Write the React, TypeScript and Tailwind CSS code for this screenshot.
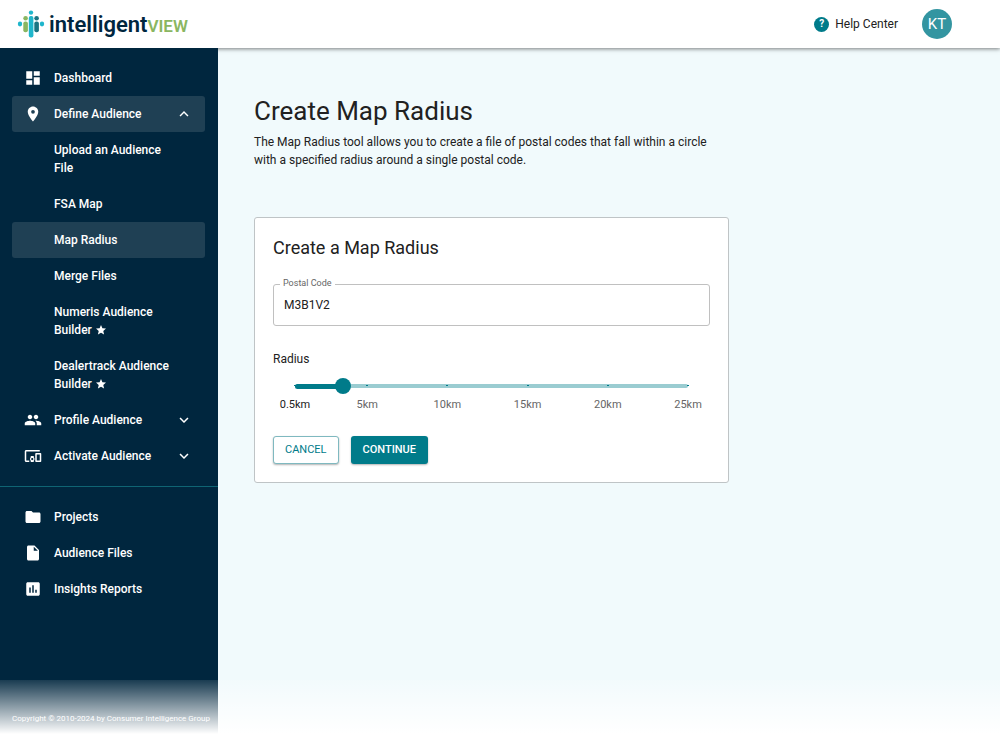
import { useState } from "react";
import {
  MdAssessment,
  MdDashboard,
  MdDevicesOther,
  MdExpandLess,
  MdExpandMore,
  MdFolder,
  MdGroup,
  MdInsertDriveFile,
  MdLocationOn,
  MdStar,
} from "react-icons/md";
import type { IconType } from "react-icons";

const MIN = 0.5;
const MAX = 25;
const MARKS = [0.5, 5, 10, 15, 20, 25];

const AUDIENCE_LINKS = [
  { label: "Upload an Audience File" },
  { label: "FSA Map" },
  { label: "Map Radius", active: true },
  { label: "Merge Files" },
  { label: "Numeris Audience Builder", star: true },
  { label: "Dealertrack Audience Builder", star: true },
];

function percent(value: number) {
  return `${((value - MIN) / (MAX - MIN)) * 100}%`;
}

function Logo() {
  return (
    <a href="#" aria-label="intelligentVIEW" className="flex items-center gap-1">
      <svg viewBox="0 0 28 30" className="h-[30px] w-7" aria-hidden="true">
        <g fill="#1fb6cc">
          <ellipse cx="3" cy="15" rx="2.2" ry="2.4" />
          <circle cx="14" cy="3.6" r="2.2" />
          <rect x="11.8" y="7" width="4.6" height="21.5" rx="2" />
          <ellipse cx="25" cy="15" rx="2.2" ry="2.4" />
        </g>
        <g fill="#8ab661">
          <circle cx="8.6" cy="9.2" r="2.3" />
          <rect x="6.3" y="12.6" width="4.6" height="10.6" rx="2" />
        </g>
        <g fill="#1b7583">
          <circle cx="19.6" cy="9.2" r="2.3" />
          <rect x="17.3" y="12.6" width="4.6" height="10.6" rx="2" />
        </g>
      </svg>
      <span className="flex items-baseline pt-[2px] leading-6">
        <span className="text-[22px] font-semibold text-[#00263e]">intelligent</span>
        <span className="text-[17px] font-semibold text-[#8ab661]">VIEW</span>
      </span>
    </a>
  );
}

function NavLink({ icon: Icon, label }: { icon: IconType; label: string }) {
  return (
    <a href="#" className="flex h-9 items-center gap-3 rounded-[3px] px-3">
      <Icon size={18} />
      {label}
    </a>
  );
}

function NavGroup({ icon: Icon, label, open }: { icon: IconType; label: string; open?: boolean }) {
  const Chevron = open ? MdExpandLess : MdExpandMore;
  return (
    <button
      type="button"
      aria-expanded={!!open}
      className={`flex h-9 w-full items-center gap-3 rounded-[3px] px-3 text-left ${open ? "bg-[#1f4054]" : ""}`}
    >
      <Icon size={18} />
      <span className="flex-1">{label}</span>
      <Chevron size={18} />
    </button>
  );
}

function Sidebar() {
  return (
    <aside className="flex w-[218px] shrink-0 flex-col bg-[#00263e] text-[12px] leading-[18px] font-medium text-white">
      <nav className="py-3">
        <div className="pr-[13px] pl-3">
          <NavLink icon={MdDashboard} label="Dashboard" />
          <NavGroup icon={MdLocationOn} label="Define Audience" open />
          {AUDIENCE_LINKS.map((l) => (
            <a
              key={l.label}
              href="#"
              className={`block rounded-[3px] py-[9px] pr-6 pl-[42px] ${l.active ? "bg-[#1f4054]" : ""}`}
            >
              {l.label}
              {l.star && <MdStar size={12} className="ml-[3px] inline align-[-2px]" />}
            </a>
          ))}
          <NavGroup icon={MdGroup} label="Profile Audience" />
          <NavGroup icon={MdDevicesOther} label="Activate Audience" />
        </div>
        <hr className="my-3 border-[#0f6473]" />
        <div className="pr-[13px] pl-3">
          <NavLink icon={MdFolder} label="Projects" />
          <NavLink icon={MdInsertDriveFile} label="Audience Files" />
          <NavLink icon={MdAssessment} label="Insights Reports" />
        </div>
      </nav>
      <p className="mt-auto px-3 pb-3 text-[8px] font-normal whitespace-nowrap">
        Copyright © 2010-2024 by Consumer Intelligence Group
      </p>
    </aside>
  );
}

function RadiusSlider() {
  const [radius, setRadius] = useState(3.5);

  return (
    <div className="mt-6">
      <label htmlFor="radius" className="block text-[12px] leading-[18px]">
        Radius
      </label>
      <div className="relative mx-[22px] mt-[11px] h-[41px]">
        <div className="absolute inset-x-0 top-[5px] h-1 rounded-full bg-[#9accd1]">
          {MARKS.map((m) => (
            <span
              key={m}
              className="absolute top-[1px] h-px w-[2px] -translate-x-1/2 bg-[#007b8a]"
              style={{ left: percent(m) }}
            />
          ))}
        </div>
        <div
          className="absolute top-[5px] left-0 h-[5px] rounded-full bg-[#007b8a]"
          style={{ width: percent(radius) }}
        />
        <input
          id="radius"
          type="range"
          min={MIN}
          max={MAX}
          step={0.5}
          value={radius}
          onChange={(e) => setRadius(Number(e.target.value))}
          className="absolute -inset-x-2 -top-px h-4 appearance-none bg-transparent [&::-webkit-slider-thumb]:size-4 [&::-webkit-slider-thumb]:appearance-none [&::-webkit-slider-thumb]:rounded-full [&::-webkit-slider-thumb]:bg-[#007b8a]"
        />
        {MARKS.map((m) => (
          <span
            key={m}
            className={`absolute top-[18px] -translate-x-1/2 text-[11px] leading-4 ${m <= radius ? "text-[#212121]" : "text-[#666]"}`}
            style={{ left: percent(m) }}
          >
            {m}km
          </span>
        ))}
      </div>
    </div>
  );
}

export default function App() {
  const [postalCode, setPostalCode] = useState("M3B1V2");

  return (
    <div className="relative flex min-h-screen flex-col bg-[#f1fafc] font-[Roboto,sans-serif] text-[#212121]">
      <header className="flex h-12 items-center justify-between bg-white pr-12 pl-[17px] shadow-[0_1px_4px_rgba(0,0,0,0.5)]">
        <Logo />
        <div className="flex items-center gap-6">
          <a href="#" className="flex items-center gap-[6px] text-[12px]">
            <span
              aria-hidden="true"
              className="flex size-[15px] items-center justify-center rounded-full bg-[#007b8a] text-[10px] leading-none font-bold text-white"
            >
              ?
            </span>
            Help Center
          </a>
          <button type="button" className="size-[30px] rounded-full bg-[#3395a1] text-[15px] text-white">
            KT
          </button>
        </div>
      </header>

      <div className="flex flex-1">
        <Sidebar />
        <main className="flex-1 px-9 pt-[47px]">
          <h1 className="text-[26px] leading-8">Create Map Radius</h1>
          <p className="mt-[6px] max-w-[475px] text-[12px] leading-[18px]">
            The Map Radius tool allows you to create a file of postal codes that fall within a circle with a
            specified radius around a single postal code.
          </p>

          <form className="mt-12 max-w-[475px] rounded-[3px] border border-[#bfc4c6] bg-white p-[18px]">
            <h2 className="text-[18px] leading-6">Create a Map Radius</h2>
            <div className="relative mt-6">
              <label
                htmlFor="postal"
                className="absolute -top-[7px] left-[7px] bg-white px-[3px] text-[9px] leading-3 text-[#666]"
              >
                Postal Code
              </label>
              <input
                id="postal"
                type="text"
                value={postalCode}
                onChange={(e) => setPostalCode(e.target.value)}
                className="block h-[42px] w-full rounded-[3px] border border-[#c0c0c0] px-[10px] text-[12px]"
              />
            </div>

            <RadiusSlider />

            <div className="mt-4 flex gap-3">
              <button
                type="button"
                className="h-7 rounded-[3px] border border-[#7fb9c0] bg-white px-[11px] text-[11px] text-[#007b8a] shadow-[0_1px_2px_rgba(0,0,0,0.3)]"
              >
                CANCEL
              </button>
              <button
                type="button"
                className="h-7 rounded-[3px] bg-[#007b8a] px-3 text-[11px] font-medium text-white shadow-[0_1px_2px_rgba(0,0,0,0.3)]"
              >
                CONTINUE
              </button>
            </div>
          </form>
        </main>
      </div>

      {/* page fades out to white at the bottom edge */}
      <div className="pointer-events-none absolute inset-x-0 bottom-0 h-[60px] bg-linear-to-b from-white/10 to-white to-90%" />
    </div>
  );
}
